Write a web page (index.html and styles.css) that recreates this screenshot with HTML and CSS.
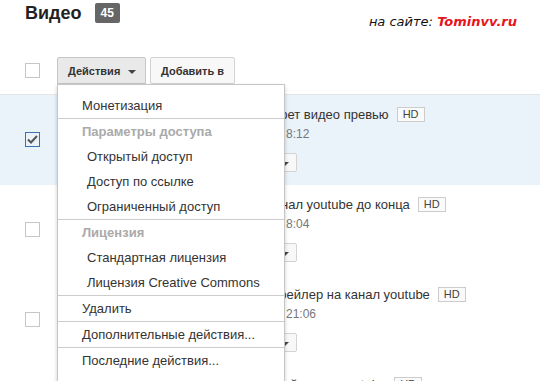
FILE: index.html
```html
<!DOCTYPE html>
<html lang="ru">
<head>
  <meta charset="UTF-8">
  <title>Видео</title>
  <link rel="stylesheet" href="styles.css">
</head>
<body>
  <div class="page">
    <div class="top">
      <h1 class="title">Видео</h1>
      <span class="count">45</span>
      <div class="site">на сайте: <span class="site-name">Tominvv.ru</span></div>
    </div>

    <div class="toolbar">
      <span class="check"></span>
      <div class="dropdown">
        <button class="btn btn-active">Действия <span class="caret"></span></button>
        <div class="menu">
          <div class="menu-item">Монетизация</div>
          <div class="menu-sep"></div>
          <div class="menu-head">Параметры доступа</div>
          <div class="menu-item sub">Открытый доступ</div>
          <div class="menu-item sub">Доступ по ссылке</div>
          <div class="menu-item sub">Ограниченный доступ</div>
          <div class="menu-sep"></div>
          <div class="menu-head">Лицензия</div>
          <div class="menu-item sub">Стандартная лицензия</div>
          <div class="menu-item sub">Лицензия Creative Commons</div>
          <div class="menu-sep"></div>
          <div class="menu-item">Удалить</div>
          <div class="menu-sep"></div>
          <div class="menu-item">Дополнительные действия...</div>
          <div class="menu-sep"></div>
          <div class="menu-item">Последние действия...</div>
        </div>
      </div>
      <button class="btn btn-add">Добавить в</button>
    </div>

    <div class="list">
      <div class="row selected">
        <span class="check checked">
          <svg width="13" height="13" viewBox="0 0 13 13"><path d="M2 6.5 L5 9.5 L11 3" fill="none" stroke="#555" stroke-width="2"/></svg>
        </span>
        <div class="thumb"></div>
        <div class="info">
          <div class="video-title"><span>Как сделать секрет видео превью</span><span class="hd">HD</span></div>
          <div class="date"><span class="day">29.03.2015</span>8:12</div>
          <button class="btn-edit">Изменить <span class="caret"></span></button>
        </div>
      </div>
      <div class="row">
        <span class="check"></span>
        <div class="thumb"></div>
        <div class="info">
          <div class="video-title"><span>Как смотреть канал youtube до конца</span><span class="hd">HD</span></div>
          <div class="date"><span class="day">27.03.2015</span>8:04</div>
          <button class="btn-edit">Изменить <span class="caret"></span></button>
        </div>
      </div>
      <div class="row">
        <span class="check"></span>
        <div class="thumb"></div>
        <div class="info">
          <div class="video-title"><span>Как поставить трейлер на канал youtube</span><span class="hd">HD</span></div>
          <div class="date"><span class="day">24.03.2015</span>21:06</div>
          <button class="btn-edit">Изменить <span class="caret"></span></button>
        </div>
      </div>
      <div class="row">
        <span class="check"></span>
        <div class="thumb"></div>
        <div class="info">
          <div class="video-title"><span>Как оформить мой канал youtube</span><span class="hd">HD</span></div>
        </div>
      </div>
    </div>
  </div>
</body>
</html>
```

FILE: styles.css
```css
* {
  box-sizing: border-box;
}

body {
  margin: 0;
  font-family: "Liberation Sans", Arial, sans-serif;
  color: #333;
  background: #fff;
}

.page {
  width: 540px;
  height: 381px;
  overflow: hidden;
}

.top {
  display: flex;
  align-items: center;
  height: 20px;
  margin-top: 3px;
  padding: 0 23px 0 25px;
}

.title {
  margin: 0;
  font-size: 18px;
  font-weight: bold;
  color: #222;
}

.count {
  margin-left: 13px;
  height: 20px;
  padding: 0 6px;
  line-height: 20px;
  font-size: 12px;
  font-weight: bold;
  color: #fff;
  background: #666;
  border-radius: 2px;
}

.site {
  margin-left: auto;
  margin-top: 16px;
  font-family: "DejaVu Sans", Verdana, sans-serif;
  font-size: 13px;
  font-style: italic;
  color: #111;
}

.site-name {
  color: #e8141c;
  font-weight: bold;
}

.toolbar {
  display: flex;
  align-items: center;
  height: 27px;
  margin-top: 34px;
  padding-left: 25px;
}

.check {
  display: inline-flex;
  align-items: center;
  justify-content: center;
  width: 15px;
  height: 15px;
  border: 1px solid #c6c6c6;
  background: #fff;
  flex-shrink: 0;
}

.toolbar .check {
  margin-right: 17px;
}

.dropdown {
  position: relative;
}

.btn {
  display: block;
  height: 27px;
  padding: 0 10px;
  border: 1px solid #d3d3d3;
  border-radius: 2px;
  background: #f8f8f8;
  font-family: inherit;
  font-size: 11px;
  font-weight: bold;
  color: #333;
  white-space: nowrap;
}

.btn-active {
  width: 89px;
  text-align: left;
  background: #e9e9e9;
  border-color: #c6c6c6;
  border-radius: 2px 2px 0 0;
}

.btn-add {
  width: 85px;
  margin-left: 4px;
  padding: 0;
}

.caret {
  display: inline-block;
  margin-left: 5px;
  border-left: 4px solid transparent;
  border-right: 4px solid transparent;
  border-top: 4px solid #444;
  vertical-align: middle;
}

.menu {
  position: absolute;
  top: 27px;
  left: 0;
  width: 228px;
  height: 320px;
  padding-top: 8px;
  background: #fff;
  border: 1px solid #c6c6c6;
  box-shadow: 0 2px 4px rgba(0, 0, 0, 0.2);
  z-index: 10;
}

.menu-item,
.menu-head {
  height: 25px;
  line-height: 25px;
  padding-left: 24px;
  font-size: 13px;
  white-space: nowrap;
}

.menu-item.sub {
  padding-left: 29px;
}

.menu-head {
  font-weight: bold;
  color: #aaa;
}

.menu-sep {
  height: 1px;
  background: #ccc;
}

.list {
  margin-top: 10px;
  border-top: 1px solid #e5e5e5;
}

.row {
  display: flex;
  height: 90px;
  padding-left: 25px;
}

.row.selected {
  background: #eaf2fa;
}

.row .check {
  margin-top: 37px;
}

.check.checked {
  border-color: #3e6fb2;
  background: transparent;
}

.thumb {
  width: 128px;
  margin-left: 17px;
}

.info {
  padding-top: 12px;
}

.video-title {
  display: flex;
  align-items: center;
  height: 15px;
  font-size: 13px;
  white-space: nowrap;
}

.hd {
  height: 15px;
  margin-left: 8px;
  padding: 0 5px;
  line-height: 13px;
  font-size: 11px;
  color: #444;
  background: #fafafa;
  border: 1px solid #ccc;
}

.date {
  margin-top: 5px;
  line-height: 14px;
  font-size: 12px;
  color: #777;
  white-space: nowrap;
}

.day {
  display: inline-block;
  width: 101px;
}

.btn-edit {
  display: block;
  width: 112px;
  height: 19px;
  margin-top: 12px;
  padding: 0 7px;
  border: 1px solid #d3d3d3;
  border-radius: 2px;
  background: #f8f8f8;
  font-family: inherit;
  font-size: 11px;
  font-weight: bold;
  color: #333;
  text-align: right;
  white-space: nowrap;
}
```
